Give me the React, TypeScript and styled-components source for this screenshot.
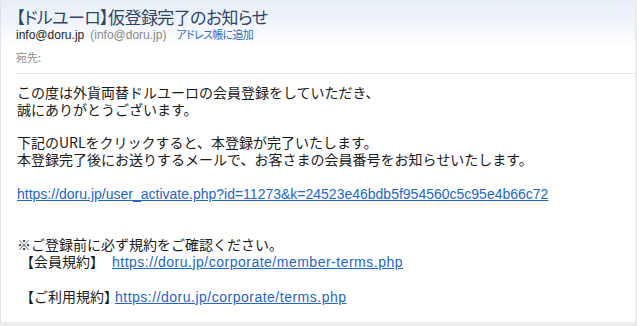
import React from "react";
import styled, { createGlobalStyle } from "styled-components";

const GlobalStyle = createGlobalStyle`
  html, body {
    margin: 0;
    padding: 0;
    background: #ebebeb;
  }
  body {
    font-family: "Liberation Sans", "Noto Sans CJK JP", sans-serif;
  }
`;

const Page = styled.div`
  width: 637px;
  height: 326px;
  padding-top: 1px;
  box-sizing: border-box;
  background: #ebebeb;
`;

const Panel = styled.div`
  width: 635px;
  height: 321px;
  box-sizing: border-box;
  background: #ffffff;
  border-left: 1px solid #e2e2e2;
  display: flex;
  flex-direction: column;
  overflow: hidden;
`;

const Header = styled.div`
  padding: 6px 0 0 15px;
  background: linear-gradient(to bottom, #e9eff9 0px, #eef3fa 18px, #ffffff 46px);
`;

const Title = styled.div`
  font-family: "Noto Sans CJK JP", sans-serif;
  font-feature-settings: "palt";
  font-size: 17px;
  letter-spacing: -0.6px;
  line-height: 20px;
  color: #2d4468;
`;

const FromRow = styled.div`
  display: flex;
  align-items: baseline;
  gap: 6px;
  font-size: 12px;
  line-height: 14px;
  color: #1e1e1e;
`;

const Muted = styled.span`
  color: #8a8a8a;
`;

const AddLink = styled.span`
  font-family: "Noto Sans CJK JP", sans-serif;
  font-feature-settings: "palt";
  font-size: 11px;
  letter-spacing: -0.7px;
  color: #2f6cc4;
  margin-left: 4px;
`;

const Recipient = styled.div`
  margin-top: 8px;
  font-family: "Noto Sans CJK JP", sans-serif;
  font-size: 11px;
  line-height: 14px;
  color: #8a8a8a;
  padding-bottom: 9px;
  border-bottom: 1px solid #e6e6e6;
`;

const Body = styled.div`
  padding: 10px 0 0 16px;
  font-family: "Noto Sans CJK JP", sans-serif;
  font-size: 14px;
  line-height: 16.8px;
  color: #1a1a1a;
`;

const Para = styled.div<{ $gapAfter?: number }>`
  margin-bottom: ${(p) => (p.$gapAfter ?? 1) * 16.8}px;
  white-space: nowrap;
`;

const TermLine = styled.div`
  display: flex;
  align-items: baseline;
  white-space: nowrap;
  padding-left: 3px;
`;

const Link = styled.a<{ $gap?: number; $tracking?: number }>`
  font-family: "Liberation Sans", sans-serif;
  font-size: 14px;
  letter-spacing: ${(p) => p.$tracking ?? 0}px;
  color: #2466c8;
  text-decoration: underline;
  text-underline-offset: 1px;
  margin-left: ${(p) => p.$gap ?? 0}px;
`;

export default function App() {
  return (
    <>
      <GlobalStyle />
      <Page>
        <Panel>
          <Header>
            <Title>【ドルユーロ】仮登録完了のお知らせ</Title>
            <FromRow>
              <span>info@doru.jp</span>
              <Muted>(info@doru.jp)</Muted>
              <AddLink>アドレス帳に追加</AddLink>
            </FromRow>
            <Recipient>宛先:</Recipient>
          </Header>
          <Body>
            <Para>
              この度は外貨両替ドルユーロの会員登録をしていただき、
              <br />
              誠にありがとうございます。
            </Para>
            <Para>
              下記のURLをクリックすると、本登録が完了いたします。
              <br />
              本登録完了後にお送りするメールで、お客さまの会員番号をお知らせいたします。
            </Para>
            <Para $gapAfter={2}>
              <Link href="#">
                https://doru.jp/user_activate.php?id=11273&amp;k=24523e46bdb5f954560c5c95e4b66c72
              </Link>
            </Para>
            <Para $gapAfter={0}>※ご登録前に必ず規約をご確認ください。</Para>
            <Para>
              <TermLine>
                【会員規約】
                <Link href="#" $gap={8} $tracking={0.5}>
                  https://doru.jp/corporate/member-terms.php
                </Link>
              </TermLine>
            </Para>
            <Para $gapAfter={0}>
              <TermLine>
                【ご利用規約】
                <Link href="#" $gap={-3} $tracking={0.5}>
                  https://doru.jp/corporate/terms.php
                </Link>
              </TermLine>
            </Para>
          </Body>
        </Panel>
      </Page>
    </>
  );
}
